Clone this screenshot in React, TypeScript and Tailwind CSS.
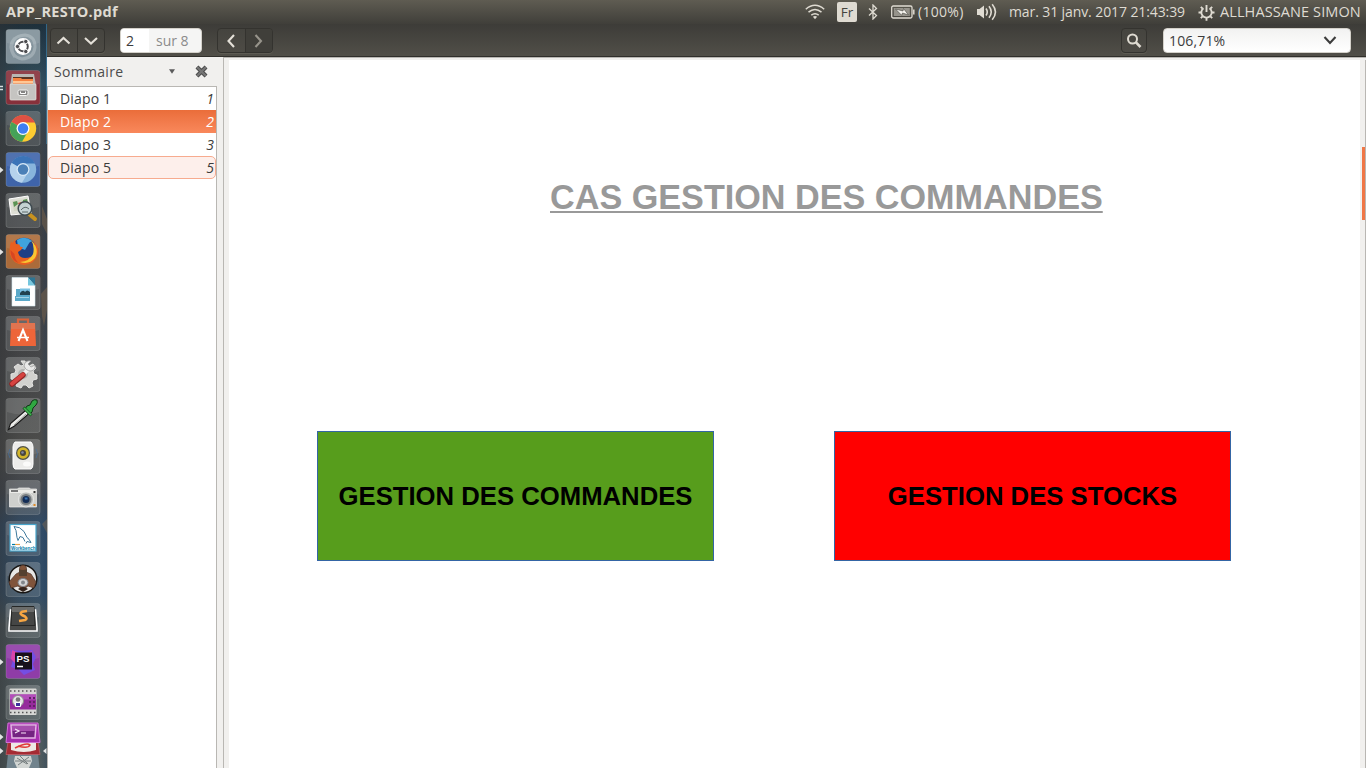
import type { ReactNode } from "react";

const ui = "font-['Open_Sans','Noto_Sans',sans-serif]";

function Chevron({ d, color = "#e4e0d8" }: { d: string; color?: string }) {
  return (
    <svg width="16" height="16" viewBox="0 0 16 16" fill="none" stroke={color} strokeWidth="2.1">
      <path d={d} />
    </svg>
  );
}

function TopBar() {
  return (
    <header className="flex h-6 shrink-0 items-center bg-linear-to-b from-[#5f5c52] to-[#403f3a] text-[14px] leading-6 text-[#dfdbd2]">
      <h1 className="ml-[6px] w-[799px] whitespace-nowrap text-[14.5px] font-bold tracking-[0.3px]">APP_RESTO.pdf</h1>
      <svg width="20" height="16" viewBox="0 0 20 16" fill="none" stroke="#dfdbd2" strokeWidth="1.5">
        <path d="M.8 5.2Q10-2.7 19.2 5.2M3.5 8.2q6.500-5.400 13 0M6.300 11.200q3.700-3 7.400 0" />
        <path d="M7.900 12.700q2.100-1.500 4.200 0L10 15.200z" fill="#dfdbd2" stroke="none" />
      </svg>
      <span className="ml-3 h-5 w-5 rounded-[2px] bg-[#dfdbd2] text-center text-[13.5px] leading-5 text-[#45443e]">Fr</span>
      <svg className="ml-[11px]" width="10" height="16" viewBox="0 0 10 16" fill="none" stroke="#dfdbd2" strokeWidth="1.300">
        <path d="M1 4.500l7.500 7L5 15V1l3.500 3.500-7.500 7" />
      </svg>
      <svg className="ml-[13px]" width="24" height="14" viewBox="0 0 24 14" fill="none" stroke="#dfdbd2">
        <rect x=".7" y="1" width="20.300" height="12" rx="1.500" strokeWidth="1.300" />
        <rect x="2.800" y="3" width="16" height="8" fill="#96938b" stroke="none" />
        <path d="M22.800 4.500v5" strokeWidth="1.500" />
        <path d="M4.500 4l7.500 2 .5-2.500L17.500 10l-6-2-.8 2.300z" fill="#f5f3ee" stroke="#45443e" strokeWidth=".6" />
      </svg>
      <span className="ml-[3px] w-[48px] whitespace-nowrap tracking-[0.3px]">(100%)</span>
      <svg className="ml-[11px]" width="20" height="18" viewBox="0 0 20 18" fill="none" stroke="#dfdbd2" strokeWidth="1.600">
        <path d="M0 6h2.500L7 2.500v13L2.500 12H0z" fill="#dfdbd2" stroke="none" />
        <path d="M9 5.500q2.500 3.500 0 7M12 3.300q4.500 5.700 0 11.400M15.200 1.200q6.500 7.800 0 15.600" />
      </svg>
      <span className="ml-3 w-[177px] whitespace-nowrap tracking-[-0.1px]">mar. 31 janv. 2017 21:43:39</span>
      <svg className="ml-[12px]" width="17" height="17" viewBox="0 0 17 17" fill="none" stroke="#dfdbd2">
        <path d="M5.500 4.200a5.200 5.200 0 1 0 6 0" strokeWidth="1.900" />
        <path d="M8.500 1v7M.5 8.500h2.500M14 8.500h2.500M8.500 14v2.700M2.800 2.800l1.800 1.800M14.200 2.800l-1.800 1.800M2.800 14.200l1.800-1.800M14.200 14.200l-1.800-1.800" strokeWidth="1.900" />
      </svg>
      <span className="ml-[5px] whitespace-nowrap text-[14.5px] tracking-[0.1px]">ALLHASSANE SIMON</span>
    </header>
  );
}

function Toolbar() {
  const box = "flex h-[25px] overflow-hidden rounded-[4px] border border-[#34332f] bg-linear-to-b from-[#45443f] to-[#4d4b45] shadow-[0_1px_0_#5d5b53]";
  const cell = "flex flex-1 items-center justify-center";
  return (
    <div className="flex h-[33px] shrink-0 items-start border-b border-[#302f2b] bg-linear-to-b from-[#3d3c38] to-[#514f48] pt-1">
      <div className={box + " ml-[3px] w-[55px]"}>
        <span className={cell + " border-r border-[#34332f]"}><Chevron d="M1.500 10.500l6-5.500 6 5.500" /></span>
        <span className={cell}><Chevron d="M2 5l6 5.500 6-5.500" /></span>
      </div>
      <div className="ml-[15px] flex h-[25px] w-[82px] overflow-hidden rounded-[4px] border border-[#d4d1ca] bg-[#f5f5f4] text-[14px] leading-[24px]">
        <span className="w-7 bg-white pl-[5px] text-[#3c3c3c]">2</span>
        <span className="ml-[7px] whitespace-nowrap text-[#8b8b8b]">sur 8</span>
      </div>
      <div className={box + " ml-[15px] w-[56px]"}>
        <span className={cell + " border-r border-[#34332f]"}><Chevron d="M11 2l-5.500 6 5.500 6" /></span>
        <span className={cell + " bg-[#403f3a]"}><Chevron d="M4.500 2l5.500 6-5.500 6" color="#97948b" /></span>
      </div>
      <div className={box + " ml-auto w-[26px]"}>
        <span className={cell}>
          <svg width="16" height="16" viewBox="0 0 16 16" fill="none" stroke="#dfdbd2">
            <circle cx="6.500" cy="6" r="4.500" strokeWidth="2" />
            <path d="M9.700 9.200l4.800 4.800" strokeWidth="2.600" />
          </svg>
        </span>
      </div>
      <div className="mr-[15px] ml-4 flex h-[25px] w-[188px] items-center justify-between rounded-[4px] border border-[#d4d1ca] bg-linear-to-b from-[#f2f2f1] to-white pr-[12px] pl-[5px] text-[14px] leading-[23px] text-[#3c3c3c]">
        <span className="tracking-[0.15px]">106,71%</span>
        <Chevron d="M2.500 4l5.500 6 5.500-6" color="#3c3c3c" />
      </div>
    </div>
  );
}

function Tile({ color = "#b4b8ba", strength = 0.2, children }: { color?: string; strength?: number; children: ReactNode }) {
  return (
    <svg className="shrink-0" width="36" height="36" viewBox="0 0 36 36">
      <rect x="1" y="1.500" width="34" height="34" rx="2.500" fill={color} fillOpacity={strength} stroke="#c8cccd" strokeOpacity=".22" />
      <path d="M2 2h32v13Q18 20 2 15z" fill="#fff" fillOpacity=".09" />
      {children}
    </svg>
  );
}

function DashIcon() {
  return (
    <Tile color="#8b9aa3" strength={0.9}>
      <path d="M7 22Q5 8 20 7q10 1 10 12-1 11-13 12Q6 29 7 18M10 29Q2 18 10 10" fill="none" stroke="#d5dce0" strokeOpacity=".35" strokeWidth="3" />
      <circle cx="18" cy="18.500" r="8.500" fill="#fff" />
      <circle cx="18" cy="18.500" r="4.800" fill="none" stroke="#4d4d50" strokeWidth="2" />
      <g fill="#4d4d50" stroke="#fff" strokeWidth=".9"><circle cx="12.500" cy="18.500" r="2.200" /><circle cx="20.800" cy="13.500" r="2.200" /><circle cx="20.800" cy="23.500" r="2.200" /></g>
    </Tile>
  );
}

function FilesIcon() {
  return (
    <Tile color="#8c2f3a" strength={0.95}>
      <path d="M7 5h22l2 12H5z" fill="#b9b7b3" />
      <path d="M8 8h20v8H8z" fill="#5a3524" />
      <path d="M8 9h8l1 1h11v5H8z" fill="#f58240" />
      <path d="M8 12h20v2H8z" fill="#ffc795" />
      <rect x="5" y="15" width="26" height="16" rx="1" fill="#c5c4c1" stroke="#e7e5e1" strokeWidth=".7" />
      <rect x="13" y="21" width="10" height="5.500" rx="1.500" fill="#858483" stroke="#f3f3f1" />
      <path d="M15.500 22.500v2h5v-2" stroke="#fff" fill="none" />
    </Tile>
  );
}

function ChromeIcon({ blue = false }: { blue?: boolean }) {
  return (
    <Tile color={blue ? "#3f67b1" : "#a2a3a3"} strength={blue ? 0.93 : 0.2}>
      <circle cx="18" cy="18.500" r="13.200" fill={blue ? "#88b4dc" : "#fccc31"} />
      <path d="M18 18.500L6.600 11.900A13.200 13.200 0 0 1 30 12.500H18z" fill={blue ? "#3b74b8" : "#df5143"} />
      <path d="M18 18.500L6.600 11.900A13.200 13.200 0 0 0 17 31.700l5.800-10z" fill={blue ? "#b5d2ec" : "#45a258"} />
      <circle cx="18" cy="18.500" r="6.500" fill={blue ? "#d8e9f7" : "#fff"} />
      <circle cx="18" cy="18.500" r="5.200" fill={blue ? "#4b80b7" : "#3f7ff2"} />
    </Tile>
  );
}

function ViewerIcon() {
  return (
    <Tile>
      <path d="M4 7l19-3 3 17-20 2z" fill="#dedfd6" stroke="#fff" />
      <path d="M7 9l15-2 2 10-15 2z" fill="#d3d6c4" />
      <path d="M8 10l4-1 1 3-4 3zM18 8l4-1 1 4-5 1z" fill="#5b9354" />
      <path d="M13 11l3-1v3h-2z" fill="#c65140" />
      <path d="M24 22l6 5" stroke="#c9921e" strokeWidth="4" strokeLinecap="round" />
      <circle cx="20" cy="16.500" r="6.800" fill="#c2d1d5" fillOpacity=".85" stroke="#404b50" strokeWidth="1.500" />
      <path d="M16 18q4-5 8-1M17 20h6" stroke="#5e6b6b" fill="none" />
    </Tile>
  );
}

function FirefoxIcon() {
  return (
    <Tile color="#b16e3a" strength={0.95}>
      <circle cx="19" cy="17.500" r="12.800" fill="#1f3f86" />
      <path d="M12 7q8-5 15 1-3 1-4 4l-3 5-7-3z" fill="#3fa3de" />
      <path d="M6 8l1 2 3-3 1 4q3 0 4 1-1 2 3 2l-2 3-3 2q1 6 7 6 7 0 10-5 1-8-2-12 6 5 5 12-2 11-14 12Q6 31 4.500 19 4.500 13 6 8z" fill="#ea5f20" />
      <path d="M26 7q9 9 4 18-6 7-15 4 10-1 13-8 2-8-2-14z" fill="#f9c532" />
      <path d="M5.500 17q0 10 8 13-4-4-4-9z" fill="#d74622" />
    </Tile>
  );
}

function WriterIcon() {
  return (
    <Tile>
      <path d="M7 3.500h16l7 8V32H7z" fill="#fff" stroke="#d5e8ef" strokeWidth=".6" />
      <path d="M23 3.500h7v8z" fill="#2d7695" />
      <path d="M23 3.500v8h7z" fill="#76c7df" />
      <path d="M11 15h14v12H10V22h1z" fill="#5aa9c9" />
      <rect x="15" y="14.500" width="10" height="6" fill="#7bc1e2" />
      <path d="M15 19q3-4 5-1 2-3 5 0v3H15z" fill="#22424e" />
      <path d="M11 23.500h13" stroke="#a5d3e4" />
    </Tile>
  );
}

function SoftwareIcon() {
  return (
    <Tile>
      <path d="M13 9V4.500h10V9" fill="none" stroke="#db643b" strokeWidth="2.200" />
      <path d="M6 8h24l1 23H5z" fill="#ed6539" />
      <path d="M6 8h24v6H6z" fill="#e07450" />
      <path d="M13.500 26l4.500-11 4.500 11" fill="none" stroke="#fff" strokeWidth="2" />
      <path d="M12 22.500h12" stroke="#fff" strokeWidth="1.500" />
    </Tile>
  );
}

function SettingsIcon() {
  return (
    <Tile>
      <path d="M16 5h4l1 4 3 1 4-2 3 4-3 3 1 3 3 1v4l-4 1-1 3 1 3-4 2-3-3h-3l-2 3-5-2 1-4-2-2-4-1v-5l4-1 1-3-2-3 4-3 3 2 3-1z" fill="#d2d2cf" stroke="#e4e4e2" />
      <circle cx="18" cy="18" r="5" fill="#b3b3b1" />
      <path d="M17 20l9-10" stroke="#f0f0f0" strokeWidth="4" />
      <path d="M30 9l-4 2-3-3 3-3q-6-1-7 5 2 5 7 5 5-1 4-6z" fill="#e9e9e8" stroke="#929292" strokeWidth=".7" />
      <path d="M7 28l11-9" stroke="#8f2524" strokeWidth="5.500" strokeLinecap="round" />
      <path d="M7 27.700l11-9.200" stroke="#d64341" strokeWidth="3.800" strokeLinecap="round" />
    </Tile>
  );
}

function DropperIcon() {
  return (
    <Tile>
      <path d="M3.500 32.500l2-6 15-13 3 3.500-14 12z" fill="#ececea" stroke="#171717" strokeWidth="1.100" />
      <path d="M9 28l12-11" stroke="#a3a6a2" />
      <path d="M20 12l2-3 3-1 2-4q2-2 5-1 1 3-1 5l-3 3-1 4-2 2z" fill="#30a741" stroke="#103616" />
      <path d="M18.500 10.500l8 8" stroke="#1c5825" strokeWidth="3" />
      <path d="M19 11l7 7" stroke="#41b751" strokeWidth="1.600" />
    </Tile>
  );
}

function SpeakerIcon() {
  return (
    <Tile>
      <path d="M10 4h16q2 2 2 5v17q0 4-2 5H10q-2-1-2-5V9q0-3 2-5z" fill="#ececea" stroke="#fff" />
      <circle cx="18" cy="15" r="7" fill="#4f5149" />
      <circle cx="18" cy="15" r="5.800" fill="#d4b62a" />
      <circle cx="18" cy="15" r="3" fill="#4a473b" />
      <circle cx="17.500" cy="14.500" r="1.300" fill="#8186a0" />
      <path d="M5 11q-3 5 0 9M31 11q3 5 0 9" stroke="#3d73ae" strokeOpacity=".6" fill="none" />
      <ellipse cx="22" cy="26" rx="4" ry="2.500" fill="#fbfbfa" />
    </Tile>
  );
}

function CameraIcon() {
  return (
    <Tile>
      <path d="M4.500 10h8l1-1h11l1 1h6v18h-27z" fill="#cfd0cd" stroke="#eeeeec" strokeWidth=".7" />
      <path d="M5 11h26v3H5z" fill="#ecece9" />
      <rect x="6" y="11" width="7" height="2" fill="#777" />
      <circle cx="21" cy="20.500" r="7.500" fill="#b9bbb9" stroke="#f4f4f4" strokeWidth=".7" />
      <circle cx="21" cy="20.500" r="5.500" fill="#73797e" />
      <circle cx="21" cy="20.500" r="3.500" fill="#142d56" />
      <path d="M19.500 18.500h3v2h-2.500z" fill="#3974b3" />
      <path d="M29.500 12v2" stroke="#333" strokeWidth="2" />
      <path d="M29.500 25v2" stroke="#e08a25" strokeWidth="2" />
    </Tile>
  );
}

function WorkbenchIcon() {
  return (
    <Tile>
      <rect x="5" y="4.500" width="26" height="26.500" fill="#fff" stroke="#48a5cb" strokeWidth="1.200" />
      <path d="M9 6.500q6 0 10 5l3 6q2 1 4 5l-4-1-1 2M9 6.500l2 4 1 7 1 3 2-4 3 1 2 4" fill="none" stroke="#3d789b" strokeWidth="1" />
      <path d="M7 24.500h3" stroke="#007ba9" strokeWidth="1.200" />
      <path d="M10 24.500h5" stroke="#e6a04b" strokeWidth="1.200" />
      <text x="6" y="30" fontSize="5.400" fontWeight="bold" textLength="24.500" lengthAdjust="spacingAndGlyphs" className="font-['Liberation_Sans',sans-serif]" fill="#007ba9">Workbench</text>
    </Tile>
  );
}

function BeaverIcon() {
  return (
    <Tile>
      <circle cx="18" cy="18" r="13.800" fill="#e8e7e5" stroke="#171513" strokeWidth="1.500" />
      <path d="M11 13l4-2q-2-6 3-7 5 1 3 7l5 2 5 8-2 6-6-2q-5 5-10 0l-7 2-2-6z" fill="#80543b" stroke="#4d3429" strokeWidth=".7" />
      <path d="M14 8q4 2 8 0v7h-8z" fill="#54402f" />
      <ellipse cx="18" cy="21.500" rx="5" ry="4" fill="#d3d4d5" stroke="#80838a" />
      <circle cx="18" cy="21.500" r="2" fill="#82878c" />
      <path d="M13 28q5-4 10 0l-5 3z" fill="#33241d" />
    </Tile>
  );
}

function SublimeIcon() {
  return (
    <Tile>
      <path d="M5.500 8h25l1.500 18v3H4v-3z" fill="#4a4b4a" stroke="#fff" strokeWidth="1.600" />
      <path d="M7 4.500h22l1 19H6z" fill="#454645" stroke="#262726" />
      <path d="M7 5h22v5H7z" fill="#6b6c6b" />
      <path d="M22 9l-5 .8q-3 1.500 0 3.200l3 1.500q3 2 0 3.500l-6 1" fill="none" stroke="#f7a643" strokeWidth="2.600" />
    </Tile>
  );
}

function PhpStormIcon() {
  return (
    <Tile color="#913ca9" strength={0.98}>
      <path d="M6 7l10 1 11-1 4 7-3 7 2 6-11 5-6-6-7-2 2-7z" fill="#744ee3" />
      <path d="M7 7l12 5 8-4-3 13-13 0-5-5z" fill="#d944ac" />
      <rect x="10" y="9.500" width="17" height="17" fill="#17101b" />
      <text x="11.500" y="18.500" fontSize="9.500" fontWeight="bold" textLength="13" lengthAdjust="spacingAndGlyphs" className="font-['Liberation_Sans',sans-serif]" fill="#fff">PS</text>
      <path d="M12 23.500h6" stroke="#fff" strokeWidth="1.500" />
    </Tile>
  );
}

function RecorderIcon() {
  return (
    <Tile>
      <rect x="4.500" y="4.500" width="27" height="26.500" rx="1" fill="#d6d7d4" />
      <path d="M5 7h26M5 28.500h26" stroke="#535353" strokeWidth="1.500" strokeDasharray="1.500 2.500" />
      <path d="M5 10.500h26v15H5z" fill="#952b9c" />
      <path d="M5 10.500h26v5H5z" fill="#b44ebb" />
      <path d="M25 13v12M29 13v12" stroke="#612166" strokeWidth="2" strokeDasharray="2 2" />
      <circle cx="13" cy="17" r="5.500" fill="#e5e5e5" stroke="#8f8f8f" />
      <circle cx="13" cy="15.500" r="2.300" fill="#777" />
      <path d="M10.500 18.500h5v4h-5z" fill="#3d319d" stroke="#fff" />
    </Tile>
  );
}

function FoldedIcons() {
  return (
    <svg className="-mt-1 shrink-0" width="36" height="51" viewBox="0 0 36 51">
      <path d="M3 33h30l2 18H1z" fill="#71838d" />
      <path d="M10 35h16l1 5-3 7H12l-3-7z" fill="#d1d5d3" />
      <path d="M12 37l10 6M15 35l8 8M24 36l-11 8M10 40h16" stroke="#777f80" strokeWidth="1" />
      <path d="M3 21h30l2 12.500H1z" fill="#a52b34" stroke="#c76168" strokeWidth=".7" />
      <path d="M6 21h25v8q-12 4-25 0z" fill="#eee9e5" />
      <path d="M10 27q12-6 15-3-2 4-12 1" stroke="#df3a38" strokeWidth="1.600" fill="none" />
      <path d="M3 2h30l2 19.500H1z" fill="#a62eae" stroke="#d072d4" />
      <path d="M6 4h25l-1 13H7z" fill="#742381" stroke="#e4b7e5" strokeWidth="1.500" />
      <path d="M7 5h23v5H7z" fill="#a64fae" />
      <path d="M10 8l4 2-4 2M16 12h5" stroke="#f7e6f7" fill="none" strokeWidth="1.200" />
    </svg>
  );
}

function Launcher() {
  return (
    <aside className="relative w-[47px] shrink-0 overflow-hidden bg-[linear-gradient(to_bottom,#1e303b_0,#33505e_60px,#3d4448_110px,#3f4042_220px,#464749_340px,#4d4d4b_425px,#434850_470px,#324c66_500px,#344e66_570px,#4b565a_600px,#505c5e_744px)]">
      <div className="flex h-full flex-col bg-[linear-gradient(to_right,#30323480_0,#30323422_40%,#30323400_85%,#19385c44_100%)]">
        <div className="flex flex-col gap-[5px] pt-[4px] pl-[5px]">
          <DashIcon /><FilesIcon /><ChromeIcon /><ChromeIcon blue /><ViewerIcon /><FirefoxIcon />
          <WriterIcon /><SoftwareIcon /><SettingsIcon /><DropperIcon /><SpeakerIcon /><CameraIcon />
          <WorkbenchIcon /><BeaverIcon /><SublimeIcon /><PhpStormIcon /><RecorderIcon /><FoldedIcons />
        </div>
      </div>
      <svg className="absolute inset-0" width="47" height="744" viewBox="0 0 47 744">
        <path d="M0 62.500h3M0 65.500h3" stroke="#d7dde0" strokeWidth="1.500" />
        <path d="M0 143l3.500 3-3.500 3zM0 225l3.500 3-3.500 3zM0 635l3.500 3-3.500 3zM0 710l3.500 3-3.500 3zM0 724l3.500 3-3.500 3zM46.500 724l-3.500 3 3.500 3z" fill="#e2e4e4" />
        <path d="M46.500 0v120" stroke="#438ab2" strokeOpacity=".6" />
        <path d="M42 182l5 13v15l-5-10zM41 270l6-7v23l-3 16-2-10zM42 500l5-5v14z" fill="#8c6d4d" fillOpacity=".4" />
      </svg>
    </aside>
  );
}

function Sidebar() {
  const row = "flex h-[23px] items-center justify-between text-[14px] leading-[22px] tracking-[0.15px]";
  return (
    <aside className="flex w-[170px] shrink-0 flex-col">
      <div className="flex h-[29px] items-center pl-[7px] text-[14px] text-[#4c4c4c]">
        <span className="w-[115px] tracking-[0.3px]">Sommaire</span>
        <svg width="6" height="5" viewBox="0 0 7 5"><path d="M0 0h7L3.500 5z" fill="#5b5b5b" /></svg>
        <svg className="ml-[20px]" width="13" height="13" viewBox="0 0 13 13">
          <path d="M2 2l9 9M11 2l-9 9" stroke="#4b4b4b" strokeWidth="4.200" />
          <path d="M2 2l9 9M11 2l-9 9" stroke="#767676" strokeWidth="2.200" />
        </svg>
      </div>
      <div className="min-h-0 flex-1 border border-b-0 border-[#b9b7b3] bg-white text-[#3c3c3c]">
        <div className={row + " pr-[2px] pl-[12px]"}><span>Diapo 1</span><i>1</i></div>
        <div className={row + " bg-linear-to-b from-[#ea6d3a] to-[#f9885b] pr-[2px] pl-[12px] text-white"}><span>Diapo 2</span><i>2</i></div>
        <div className={row + " pr-[2px] pl-[12px]"}><span>Diapo 3</span><i>3</i></div>
        <div className={row + " rounded-[5px] border border-[#f7ab8f] bg-[#fdefeb] pr-[1px] pl-[11px]"}><span>Diapo 5</span><i>5</i></div>
      </div>
    </aside>
  );
}

function DocumentPage() {
  return (
    <main className="flex min-w-0 flex-1 border-t border-l border-[#b9b7b3] pt-[2px] pl-[5px]">
      <article className="flex w-[1131px] flex-col bg-white font-['Liberation_Sans',Arial,sans-serif] font-bold">
        <h2 className="mt-[118px] ml-[321px] w-[553px] whitespace-nowrap text-[34.2px] leading-[39px] text-[#999] underline decoration-2 underline-offset-[2px]">CAS GESTION DES COMMANDES</h2>
        <div className="mt-[214px] ml-[88px] flex gap-[120px] text-[25.7px] leading-[30px] text-black">
          <div className="flex h-[130px] w-[397px] items-center justify-center border border-[#3465a4] bg-[#579d1c]">GESTION DES COMMANDES</div>
          <div className="flex h-[130px] w-[397px] items-center justify-center border border-[#3465a4] bg-[#ff0000]">GESTION DES STOCKS</div>
        </div>
      </article>
      <div className="flex flex-1 justify-end border-r border-[#b9b7b3]">
        <div className="mt-[87px] h-[73px] w-[3px] bg-[#f07746]" />
      </div>
    </main>
  );
}

export default function App() {
  return (
    <div className={ui + " flex h-screen w-screen flex-col overflow-hidden bg-[#f1f0ee]"}>
      <TopBar />
      <div className="flex min-h-0 flex-1">
        <Launcher />
        <div className="flex min-w-0 flex-1 flex-col">
          <Toolbar />
          <div className="flex min-h-0 flex-1">
            <Sidebar />
            <div className="w-[6px] shrink-0" />
            <DocumentPage />
          </div>
        </div>
      </div>
    </div>
  );
}
